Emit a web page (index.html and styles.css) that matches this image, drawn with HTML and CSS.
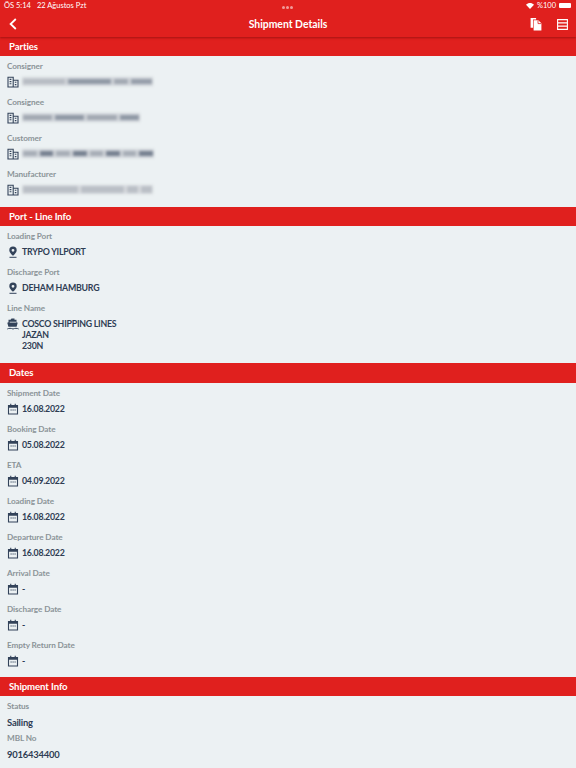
FILE: index.html
```html
<!DOCTYPE html>
<html>
<head>
  <meta charset="UTF-8">
  <link rel="stylesheet" href="styles.css">
</head>
<body>
  <svg class="icon-defs" width="0" height="0">
    <symbol id="i-building" viewBox="0 0 12 12">
      <path d="M1 11V1.2h5.2V11M6.2 4.2h4.800V11H.4M2.600 3.400h1.800M2.600 5.600h1.800M2.600 7.800h1.800M7.800 6.200h1.600M7.800 8.600h1.600" fill="none" stroke="currentColor" stroke-width="1.100"/>
    </symbol>
    <symbol id="i-pin" viewBox="0 0 12 12">
      <path d="M6 .6a3.700 3.700 0 0 0-3.700 3.700C2.300 6.800 6 9.800 6 9.800s3.700-3 3.700-5.500A3.700 3.700 0 0 0 6 .6zm0 2.300a1.400 1.400 0 1 1 0 2.800 1.400 1.400 0 0 1 0-2.800z" fill="currentColor" fill-rule="evenodd"/>
      <path d="M2.500 11.300h7" stroke="currentColor" stroke-width="1"/>
    </symbol>
    <symbol id="i-ship" viewBox="0 0 12 12">
      <path d="M4.500.5h3v1.300h2v2.400l1.200.5-1.100 4H1.400l-1.100-4 1.200-.5V1.800h2z" fill="currentColor"/>
      <path d="M2.700 4.200h6.600" stroke="#ecf1f3" stroke-width=".8"/>
      <path d="M.3 11c1.800-.9 3.600-.9 5.700 0 2.100-.9 3.900-.9 5.700 0" fill="none" stroke="currentColor" stroke-width="1"/>
    </symbol>
    <symbol id="i-cal" viewBox="0 0 12 12">
      <path d="M1.500 2.500h9V11h-9z" fill="none" stroke="currentColor" stroke-width="1.100"/>
      <path d="M1.500 2.500h9v2.300h-9zM3.200.8h1.100v2H3.200zM7.700.8h1.100v2H7.700z" fill="currentColor"/>
      <path d="M3.500 7h1.200M5.500 7h1.200M7.500 7h1.200" stroke="currentColor" stroke-width="1"/>
    </symbol>
  </svg>

  <!-- Status bar + nav -->
  <header class="top">
    <div class="status">
      <span class="status-time">ÖS 5:14</span>
      <span class="status-date">22 Ağustos Pzt</span>
      <span class="status-dots"><i></i><i></i><i></i></span>
      <span class="status-right">
        <svg class="wifi" viewBox="0 0 12 9" width="8" height="6"><path d="M6 9 0 2.800C3.500-.9 8.500-.9 12 2.800z" fill="#fff"/></svg>
        <span>%100</span>
        <span class="battery"></span>
      </span>
    </div>
    <div class="nav">
      <svg class="nav-back" viewBox="0 0 8 12" width="8" height="12"><path d="M6.800 1 1.600 6l5.200 5" fill="none" stroke="#fff" stroke-width="1.800"/></svg>
      <div class="nav-title">Shipment Details</div>
      <div class="nav-icons">
        <svg viewBox="0 0 12 14" width="12" height="14"><path d="M.6 1h5.500v1.500H3v8.300H.6z" fill="#fff"/><path d="M3.600 3.200h4.700l3.100 3.100v7.100H3.600z" fill="#fff"/><path d="M8 3.400v3.200h3.200" fill="none" stroke="#e0201e" stroke-width=".8"/></svg>
        <svg viewBox="0 0 11 11" width="11" height="11"><path d="M.6.600h9.800v9.800H.6zM.6 3.900h9.800M.6 7.100h9.800" fill="none" stroke="#fff" stroke-width="1.100"/></svg>
      </div>
    </div>
  </header>

  <div class="section-title first">Parties</div>
  <div class="field">
    <div class="label">Consigner</div>
    <div class="value"><svg class="icon"><use href="#i-building"/></svg><div class="smudge w129 s-a"><i></i><i></i><i></i><i></i></div></div>
  </div>
  <div class="field">
    <div class="label">Consignee</div>
    <div class="value"><svg class="icon"><use href="#i-building"/></svg><div class="smudge w116 s-b"><i></i><i></i><i></i><i></i></div></div>
  </div>
  <div class="field">
    <div class="label">Customer</div>
    <div class="value"><svg class="icon"><use href="#i-building"/></svg><div class="smudge w130 s-c"><i></i><i></i><i></i><i></i><i></i><i></i><i></i><i></i></div></div>
  </div>
  <div class="field">
    <div class="label">Manufacturer</div>
    <div class="value"><svg class="icon"><use href="#i-building"/></svg><div class="smudge w129 s-d"><i></i><i></i><i></i><i></i></div></div>
  </div>

  <div class="section-title">Port - Line Info</div>
  <div class="field">
    <div class="label">Loading Port</div>
    <div class="value"><svg class="icon"><use href="#i-pin"/></svg><div>TRYPO YILPORT</div></div>
  </div>
  <div class="field">
    <div class="label">Discharge Port</div>
    <div class="value"><svg class="icon"><use href="#i-pin"/></svg><div>DEHAM HAMBURG</div></div>
  </div>
  <div class="field">
    <div class="label">Line Name</div>
    <div class="value"><svg class="icon"><use href="#i-ship"/></svg><div>COSCO SHIPPING LINES<br>JAZAN<br>230N</div></div>
  </div>

  <div class="section-title tall">Dates</div>
  <div class="field">
    <div class="label">Shipment Date</div>
    <div class="value"><svg class="icon"><use href="#i-cal"/></svg><div>16.08.2022</div></div>
  </div>
  <div class="field">
    <div class="label">Booking Date</div>
    <div class="value"><svg class="icon"><use href="#i-cal"/></svg><div>05.08.2022</div></div>
  </div>
  <div class="field">
    <div class="label">ETA</div>
    <div class="value"><svg class="icon"><use href="#i-cal"/></svg><div>04.09.2022</div></div>
  </div>
  <div class="field">
    <div class="label">Loading Date</div>
    <div class="value"><svg class="icon"><use href="#i-cal"/></svg><div>16.08.2022</div></div>
  </div>
  <div class="field">
    <div class="label">Departure Date</div>
    <div class="value"><svg class="icon"><use href="#i-cal"/></svg><div>16.08.2022</div></div>
  </div>
  <div class="field">
    <div class="label">Arrival Date</div>
    <div class="value"><svg class="icon"><use href="#i-cal"/></svg><div>-</div></div>
  </div>
  <div class="field">
    <div class="label">Discharge Date</div>
    <div class="value"><svg class="icon"><use href="#i-cal"/></svg><div>-</div></div>
  </div>
  <div class="field">
    <div class="label">Empty Return Date</div>
    <div class="value"><svg class="icon"><use href="#i-cal"/></svg><div>-</div></div>
  </div>

  <div class="section-title after-tall">Shipment Info</div>
  <div class="field plain">
    <div class="label">Status</div>
    <div class="value">Sailing</div>
  </div>
  <div class="field plain">
    <div class="label">MBL No</div>
    <div class="value">9016434400</div>
  </div>
</body>
</html>
```

FILE: styles.css
```css
html, body {
  margin: 0;
  padding: 0;
}
body {
  height: 768px;
  overflow: hidden;
  background: #ecf1f3;
  font-family: Lato, sans-serif;
  color: #2f3d54;
}
.icon-defs {
  display: block;
  height: 0;
}
.top {
  height: 37px;
  background: #e0201e;
  color: #fff;
  box-shadow: 0 1px 2px rgba(120, 10, 10, 0.6);
  position: relative;
  z-index: 1;
}
.status {
  display: flex;
  align-items: center;
  height: 11px;
  padding: 0 4px;
  font-size: 7.5px;
  line-height: 11px;
  position: relative;
}
.status-date {
  margin-left: 6px;
}
.status-dots {
  position: absolute;
  left: 282px;
  top: 6px;
  display: flex;
  gap: 1px;
}
.status-dots i {
  width: 3px;
  height: 3px;
  border-radius: 50%;
  background: rgba(255, 255, 255, 0.55);
}
.status-right {
  margin-left: auto;
  display: flex;
  align-items: center;
  gap: 3px;
}
.battery {
  width: 12px;
  height: 5px;
  background: #fff;
  border-radius: 1px;
  margin-right: 1px;
}
.nav {
  display: flex;
  align-items: center;
  height: 26px;
  padding: 0 8px;
}
.nav-title {
  flex: 1;
  text-align: center;
  font-size: 10.4px;
  font-weight: 700;
}
.nav-back {
  flex: none;
  margin-left: 1px;
  margin-right: 29px;
}
.nav-icons {
  display: flex;
  align-items: center;
  gap: 15px;
  width: 38px;
  flex: none;
  justify-content: flex-end;
}
.section-title {
  height: 19px;
  line-height: 19px;
  margin-top: 7px;
  padding-left: 9px;
  background: #e0201e;
  color: #fff;
  font-size: 9.6px;
  letter-spacing: -0.1px;
  font-weight: 700;
}
.section-title.first {
  margin-top: 0;
}
.section-title.tall {
  height: 20px;
}
.section-title.after-tall {
  margin-top: 6px;
}
.field {
  padding: 4px 0 0 7px;
  height: 32px;
}
.label {
  height: 12px;
  line-height: 12px;
  font-size: 8.2px;
  letter-spacing: -0.1px;
  font-weight: 700;
  color: #8b9498;
}
.value {
  display: flex;
  align-items: flex-start;
  padding-top: 4px;
  font-size: 8.8px;
  letter-spacing: -0.25px;
  line-height: 11px;
  font-weight: 700;
}
.field:has(br) {
  height: 54px;
}
.plain {
  height: 28px;
}
.plain .value {
  padding-top: 5px;
  font-size: 9.4px;
  letter-spacing: -0.2px;
}
.icon {
  width: 12px;
  height: 12px;
  margin-right: 3px;
  flex: none;
  color: #33435a;
}

/* blurred company names */
.smudge {
  display: flex;
  align-items: center;
  gap: 3px;
  height: 9px;
  margin-top: 1px;
  padding: 0 1px;
  background: #d3d7db;
  filter: blur(1.5px);
}
.smudge i {
  flex: 1;
  height: 5px;
  background: #a0a7b1;
}
.s-a i:nth-child(1) {
  flex: 4;
  background: #b6bbc2;
}
.s-a i:nth-child(2) {
  flex: 4;
  background: #8d96a3;
}
.s-a i:nth-child(3) {
  flex: 1.300;
}
.s-a i:nth-child(4) {
  flex: 2;
  background: #949ca8;
}
.s-b i:nth-child(1) {
  flex: 3;
}
.s-b i:nth-child(2) {
  flex: 3;
  background: #8d96a3;
}
.s-b i:nth-child(3) {
  flex: 3;
}
.s-b i:nth-child(4) {
  flex: 2;
  background: #8d96a3;
}
.s-c i:nth-child(even) {
  background: #737e8e;
}
.s-c i:nth-child(odd) {
  background: #a5acb5;
}
.s-d {
  background: #d9dcdf;
}
.s-d i {
  height: 7px;
  background: #babfc6;
}
.s-d i:nth-child(1) {
  flex: 5;
}
.s-d i:nth-child(2) {
  flex: 4;
}
.w116 {
  width: 116px;
}
.w129 {
  width: 129px;
}
.w130 {
  width: 130px;
}
```
